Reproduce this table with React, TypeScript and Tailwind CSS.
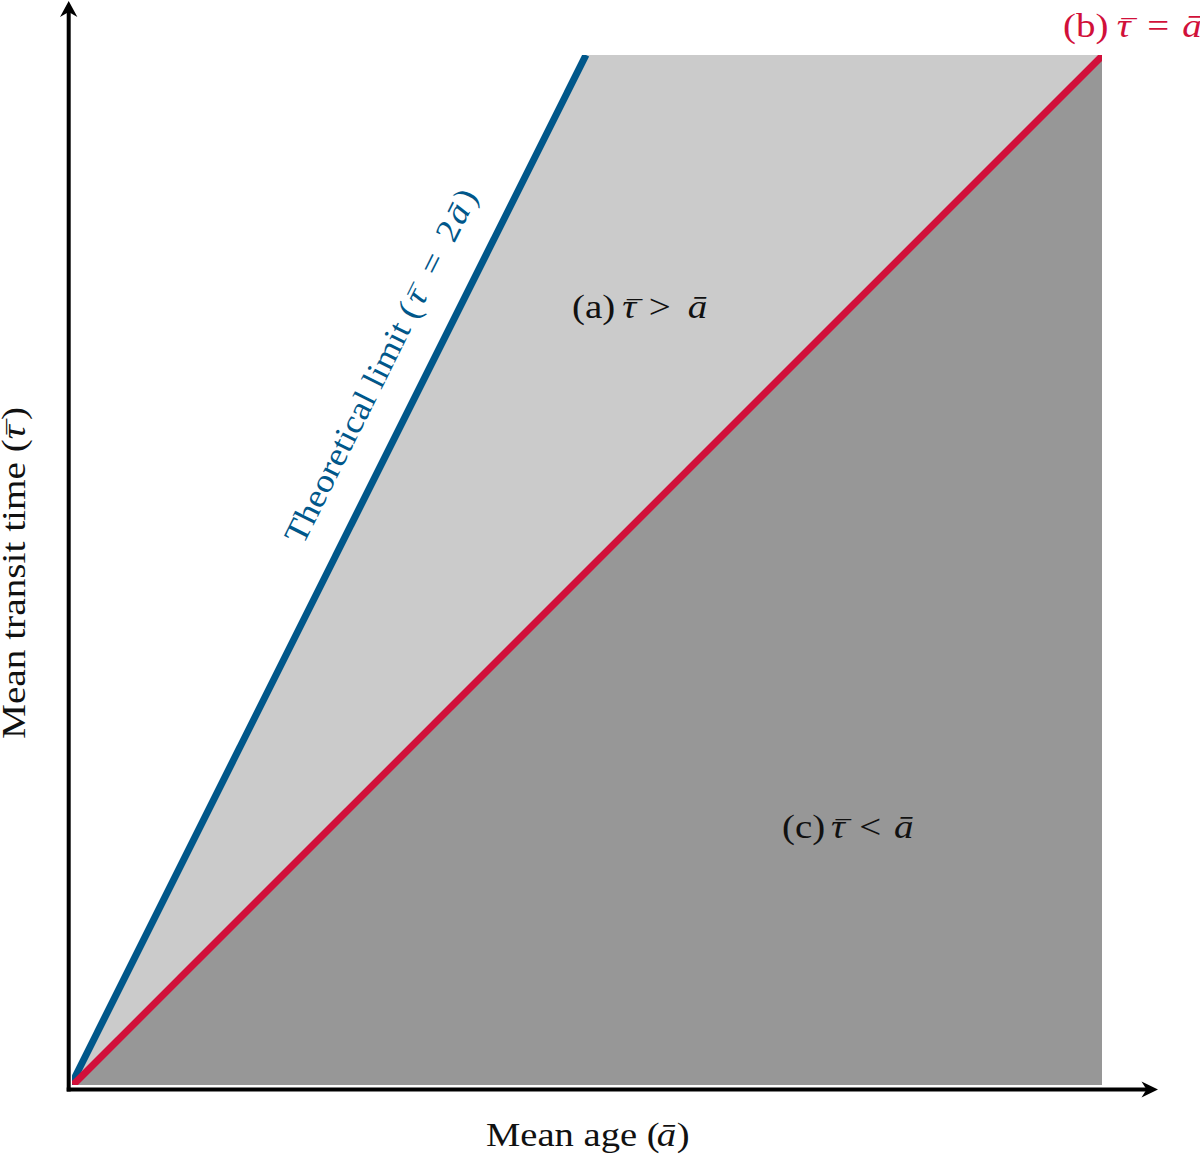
import React from "react";

// figure: mean transit time vs mean age regions

const BLUE = "#00578a";
const RED = "#d1103a";
const ABAR = "\u0101";
const MACRON = "\u00AF";

type Part = { x: number; t: string; it?: boolean; bar?: boolean };

// local coordinates, the whole label is stretched by sx along the baseline
function MathText({
  x,
  y,
  sx,
  parts,
  fill = "#111",
}: {
  x: number;
  y: number;
  sx: number;
  parts: Part[];
  fill?: string;
}) {
  return (
    <g transform={`translate(${x} ${y}) scale(${sx} 1)`}>
      <text y={0} fill={fill} fontSize={33} xmlSpace="preserve">
        {parts.map((p, i) => (
          <React.Fragment key={i}>
            <tspan x={p.x} y={0} fontStyle={p.it ? "italic" : "normal"}>
              {p.t}
            </tspan>
            {p.bar && (
              <tspan x={p.x + 2} y={0} fontSize={26} fontStyle="italic">
                {MACRON}
              </tspan>
            )}
          </React.Fragment>
        ))}
      </text>
    </g>
  );
}

export default function App() {
  return (
    <div className="w-[1200px] h-[1159px] bg-white overflow-hidden font-['Liberation_Serif','Times_New_Roman',serif]">
      <svg width={1200} height={1159} viewBox="0 0 1200 1159" className="block">
        <defs>
          <clipPath id="plot">
            <rect x={72} y={55} width={1030} height={1030} />
          </clipPath>
        </defs>

        {/* regions */}
        <g clipPath="url(#plot)">
          <polygon points="71,1085 586,55 1103,55 73,1085" fill="#cbcbcb" />
          <polygon points="73,1085 1103,55 1102,1085" fill="#979797" />
          <line x1={71} y1={1085} x2={586} y2={55} stroke={BLUE} strokeWidth={7} />
          <line x1={73} y1={1085} x2={1103} y2={55} stroke={RED} strokeWidth={7} />
        </g>

        {/* axes */}
        <line x1={68.7} y1={1091.5} x2={68.7} y2={10} stroke="#000" strokeWidth={4} />
        <polygon points="68.7,1 60,17 68.7,12 77.4,17" fill="#000" />
        <line x1={66.7} y1={1089.5} x2={1150} y2={1089.5} stroke="#000" strokeWidth={4} />
        <polygon points="1158,1089.5 1141.5,1081.5 1146.5,1089.5 1141.5,1097.5" fill="#000" />

        {/* region labels */}
        <MathText
          x={1063}
          y={37}
          sx={1.18}
          fill={RED}
          parts={[
            { x: 0, t: "(b)" },
            { x: 45.5, t: "\u03C4", it: true, bar: true },
            { x: 71.5, t: "=" },
            { x: 101, t: ABAR, it: true },
          ]}
        />
        <MathText
          x={572}
          y={318}
          sx={1.18}
          parts={[
            { x: 0, t: "(a)" },
            { x: 42.5, t: "\u03C4", it: true, bar: true },
            { x: 65, t: ">" },
            { x: 98, t: ABAR, it: true },
          ]}
        />
        <MathText
          x={782}
          y={838}
          sx={1.18}
          parts={[
            { x: 0, t: "(c)" },
            { x: 41.5, t: "\u03C4", it: true, bar: true },
            { x: 65.5, t: "<" },
            { x: 94.9, t: ABAR, it: true },
          ]}
        />

        {/* x axis title */}
        <MathText
          x={486}
          y={1146}
          sx={1.17}
          parts={[
            { x: 0, t: "Mean age (" },
            { x: 146, t: ABAR, it: true },
            { x: 163, t: ")" },
          ]}
        />

        {/* y axis title */}
        <g transform="translate(25 739) rotate(-90)">
          <MathText
            x={0}
            y={0}
            sx={1.19}
            parts={[
              { x: 0, t: "Mean transit time" },
              { x: 241, t: "(" },
              { x: 252, t: "\u03C4", it: true, bar: true },
              { x: 268, t: ")" },
            ]}
          />
        </g>

        {/* limit line label */}
        <g transform="translate(303 546) rotate(-63.43)">
          <MathText
            x={0}
            y={0}
            sx={1.1}
            fill={BLUE}
            parts={[
              { x: 0, t: "Theoretical limit" },
              { x: 229, t: "(" },
              { x: 243, t: "\u03C4", it: true, bar: true },
              { x: 273, t: "=" },
              { x: 307, t: "2" },
              { x: 325, t: ABAR, it: true },
              { x: 345, t: ")" },
            ]}
          />
        </g>
      </svg>
    </div>
  );
}
